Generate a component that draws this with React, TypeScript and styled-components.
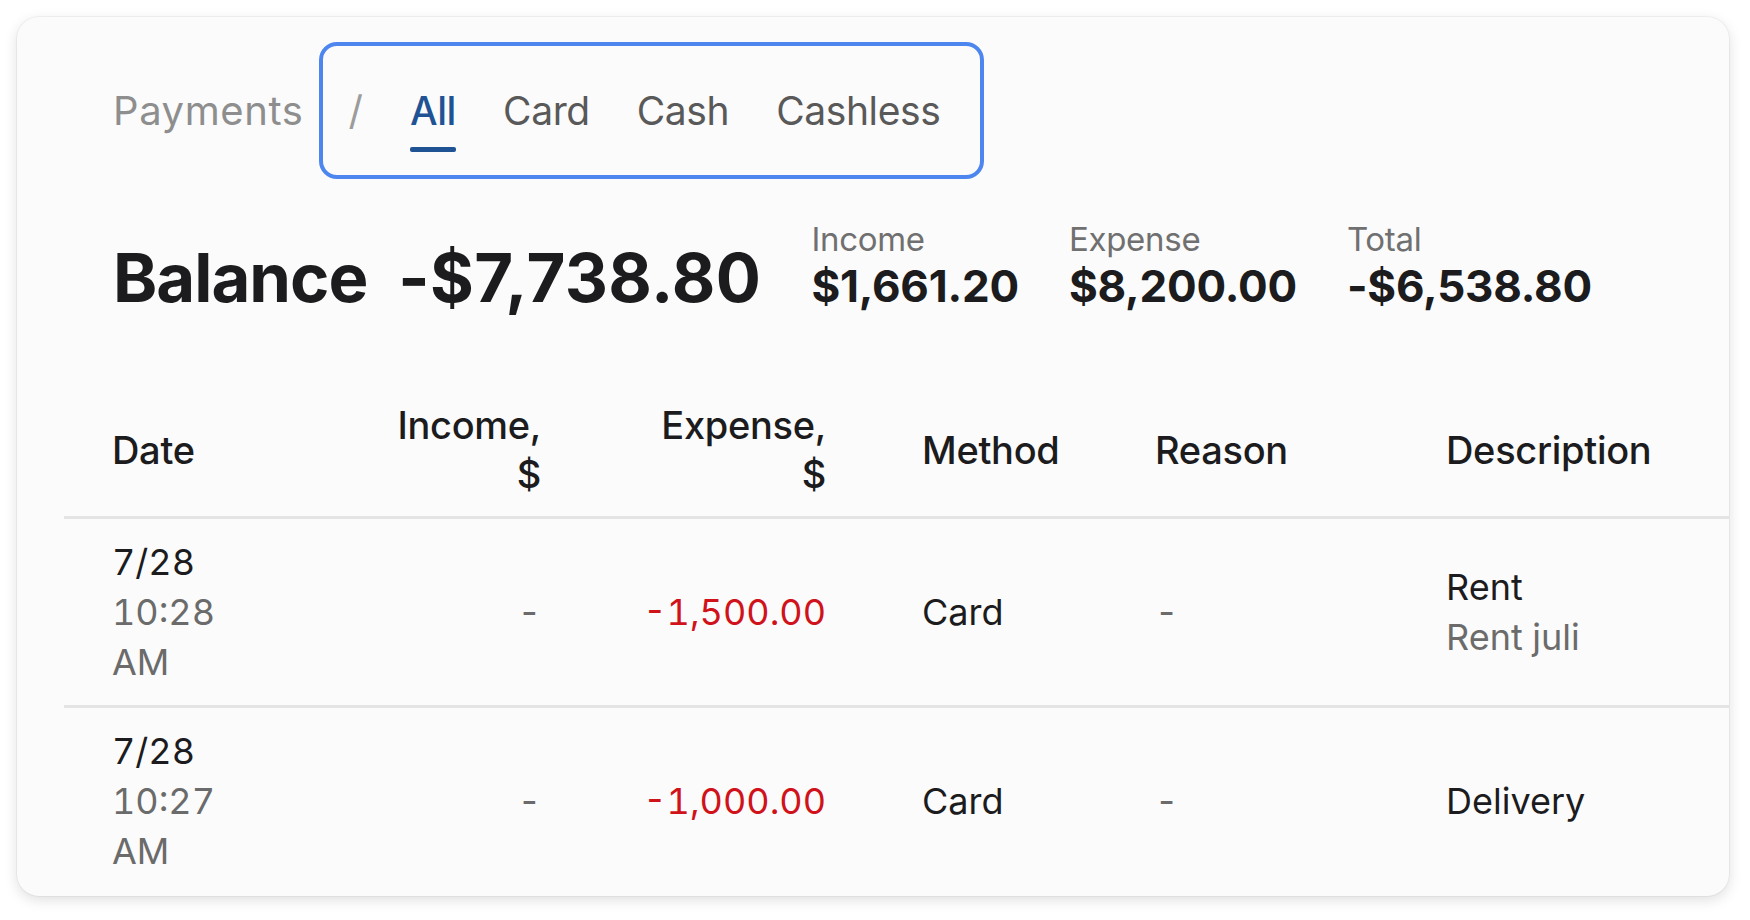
import React from 'react'
import styled, { createGlobalStyle } from 'styled-components'

const GlobalStyle = createGlobalStyle`
    html, body {
        margin: 0;
        padding: 0;
        background: #ffffff;
    }
    body {
        font-family: Inter, "Noto Sans", "Liberation Sans", sans-serif;
        color: #1c1c1e;
        -webkit-font-smoothing: antialiased;
    }
`

const Page = styled.div`
    padding: 17px 21px 24px 17px;
    box-sizing: border-box;
    width: 1750px;
    height: 920px;
`

const Card = styled.div`
    width: 1712px;
    height: 879px;
    box-sizing: border-box;
    padding: 25px 0 0 47px;
    background: #fbfbfb;
    border-radius: 22px;
    box-shadow: 0 0 0 1px rgba(0, 0, 0, 0.04), 0 4px 14px rgba(0, 0, 0, 0.13);
    overflow: hidden;
`

const Header = styled.div`
    display: flex;
    align-items: baseline;
    gap: 15px;
    padding-left: 49px;
`

const Crumb = styled.span`
    font-size: 40px;
    line-height: 48px;
    color: #8e8e8e;
    letter-spacing: 0.6px;
`

const TabList = styled.div`
    display: flex;
    align-items: flex-start;
    gap: 47px;
    padding: 41px 40px 23px 26px;
    border: 4px solid #4d86ee;
    border-radius: 18px;
`

const Slash = styled.span`
    font-size: 40px;
    line-height: 48px;
    color: #9c9c9c;
`

const Tab = styled.button<{ $active?: boolean }>`
    display: flex;
    flex-direction: column;
    align-items: stretch;
    gap: 12px;
    padding: 0;
    border: 0;
    background: none;
    font-family: inherit;
    font-size: 39px;
    line-height: 48px;
    letter-spacing: -0.4px;
    font-weight: ${({ $active }) => ($active ? 500 : 400)};
    color: ${({ $active }) => ($active ? '#1f5394' : '#595959')};
    cursor: pointer;

    &::after {
        content: '';
        height: 5px;
        border-radius: 2px;
        background: ${({ $active }) => ($active ? '#1f5394' : 'transparent')};
    }
`

const Summary = styled.div`
    display: flex;
    align-items: last baseline;
    gap: 50px;
    margin-top: 46px;
    padding-left: 49px;
`

const BalanceTitle = styled.div`
    display: flex;
    gap: 31px;
    font-size: 67px;
    line-height: 84px;
    font-weight: 700;
    letter-spacing: -1px;
    color: #1c1c1e;
`

const BalanceAmount = styled.span`
    letter-spacing: 0.4px;
`

const Stat = styled.div`
    display: flex;
    flex-direction: column;
`

const StatLabel = styled.span`
    font-size: 33px;
    line-height: 28px;
    color: #707070;
    letter-spacing: -0.3px;
`

const StatValue = styled.span`
    margin-top: 6px;
    font-size: 44px;
    line-height: 54px;
    font-weight: 700;
    letter-spacing: -0.2px;
    color: #1c1c1e;
`

const Table = styled.div`
    margin-top: 64px;
`

const Row = styled.div<{ $head?: boolean }>`
    display: grid;
    grid-template-columns: 226px 299px 285px 233px 291px 1fr;
    align-items: center;
    padding: ${({ $head }) => ($head ? '17px 0' : '18px 0')};
    border-bottom: 3px solid #e4e4e4;
    font-size: ${({ $head }) => ($head ? '38px' : '36px')};
    line-height: ${({ $head }) => ($head ? '49px' : '50px')};
    font-weight: ${({ $head }) => ($head ? 500 : 400)};
    letter-spacing: ${({ $head }) => ($head ? '-0.3px' : '0')};
    font-variant-numeric: ${({ $head }) => ($head ? 'normal' : 'tabular-nums')};
    color: #1c1c1e;

    &:last-child {
        border-bottom: 0;
    }
`

const Cell = styled.div<{ $align?: 'left' | 'right'; $tone?: 'muted' | 'negative' }>`
    padding: 0 48px;
    text-align: ${({ $align }) => $align || 'left'};
    color: ${({ $tone }) =>
        $tone === 'muted' ? '#6b6b6b' : $tone === 'negative' ? '#d0121b' : 'inherit'};
`

const Sub = styled.div`
    color: #6b6b6b;
`

const payments = [
    { day: '7/28', time: '10:28 AM', expense: '-1,500.00', method: 'Card', title: 'Rent', note: 'Rent juli' },
    { day: '7/28', time: '10:27 AM', expense: '-1,000.00', method: 'Card', title: 'Delivery' },
]

const tabs = ['All', 'Card', 'Cash', 'Cashless']

export default function App() {
    return (
        <Page>
            <GlobalStyle />
            <Card>
                <Header>
                    <Crumb>Payments</Crumb>
                    <TabList role="tablist">
                        <Slash>/</Slash>
                        {tabs.map((t, i) => (
                            <Tab key={t} role="tab" $active={i === 0}>
                                {t}
                            </Tab>
                        ))}
                    </TabList>
                </Header>

                <Summary>
                    <BalanceTitle>
                        <span>Balance</span>
                        <BalanceAmount>-$7,738.80</BalanceAmount>
                    </BalanceTitle>
                    <Stat>
                        <StatLabel>Income</StatLabel>
                        <StatValue>$1,661.20</StatValue>
                    </Stat>
                    <Stat>
                        <StatLabel>Expense</StatLabel>
                        <StatValue>$8,200.00</StatValue>
                    </Stat>
                    <Stat>
                        <StatLabel>Total</StatLabel>
                        <StatValue>-$6,538.80</StatValue>
                    </Stat>
                </Summary>

                <Table>
                    <Row $head>
                        <Cell>Date</Cell>
                        <Cell $align="right">Income,<br />$</Cell>
                        <Cell $align="right">Expense,<br />$</Cell>
                        <Cell>Method</Cell>
                        <Cell>Reason</Cell>
                        <Cell>Description</Cell>
                    </Row>
                    {payments.map((p, i) => (
                        <Row key={i}>
                            <Cell>
                                {p.day}
                                <Sub>{p.time}</Sub>
                            </Cell>
                            <Cell $align="right" $tone="muted">-</Cell>
                            <Cell $align="right" $tone="negative">{p.expense}</Cell>
                            <Cell>{p.method}</Cell>
                            <Cell $tone="muted">-</Cell>
                            <Cell>
                                {p.title}
                                {p.note && <Sub>{p.note}</Sub>}
                            </Cell>
                        </Row>
                    ))}
                </Table>
            </Card>
        </Page>
    )
}
